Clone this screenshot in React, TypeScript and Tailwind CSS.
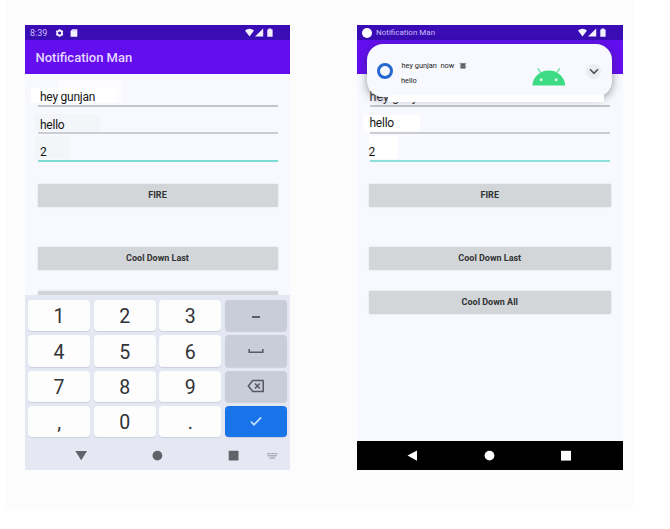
import type { ReactNode } from "react";

function StatusIcons() {
  return (
    <svg width="30" height="10" viewBox="0 0 30 10" fill="#f4f1ff" className="shrink-0">
      <path d="M0 2.6Q4.5 -1.1 9 2.6L4.5 8.6Z" />
      <path d="M18.2 0.5V8.6H10Z" />
      <path d="M22.3 1.5H23.5V0.5H26.3V1.5H27.6V8.8H22.3Z" />
    </svg>
  );
}

function Button({ label, className = "" }: { label: string; className?: string }) {
  return (
    <div
      className={`flex h-[23px] shrink-0 items-center justify-center rounded-[1px] bg-[#d3d6d9] pt-px text-[9px] font-bold text-[#303234] shadow-[0_0_2px_#d3d6d9] ${className}`}
    >
      {label}
    </div>
  );
}

function Key({ children, tone = "bg-[#fdfdfe]" }: { children: ReactNode; tone?: string }) {
  return (
    <div
      className={`flex items-center justify-center rounded-[4px] text-[19.5px] leading-none text-[#303236] shadow-[0_1px_1px_#cdd0dc] ${tone}`}
    >
      {children}
    </div>
  );
}

function Digit({ children }: { children: ReactNode }) {
  return (
    <Key>
      <span className="pt-[3px]">{children}</span>
    </Key>
  );
}

function LeftPhone() {
  return (
    <div className="flex h-[445px] w-[265px] shrink-0 flex-col overflow-hidden bg-[#f8f9ff]">
      <div className="flex h-[15px] shrink-0 items-center bg-[#3a0cb5] pl-[5px] pr-[15px] pt-px text-[9px] text-[#cdbcf5]">
        <span className="w-[25px] pt-px">8:39</span>
        <svg width="24" height="10" viewBox="0 0 24 10" fill="#f4f1ff">
          <circle cx="4.6" cy="5" r="2.4" fill="none" stroke="#f4f1ff" strokeWidth="1.7" />
          <path
            d="M4.6 1.2V2.4M4.6 7.6V8.8M1.3 3.1L2.4 3.7M6.8 6.3L7.9 6.9M1.3 6.9L2.4 6.3M6.8 3.7L7.9 3.1"
            stroke="#f4f1ff"
            strokeWidth="1.8"
          />
          <path d="M17.3 1.2H22.3V8.7H15.6V3Z" />
          <path d="M17.8 2V3.4M19.3 2V3.4M20.8 2V3.4" stroke="#a995e4" strokeWidth="0.5" />
        </svg>
        <span className="flex-1" />
        <StatusIcons />
      </div>
      <div className="flex h-[34px] shrink-0 items-center bg-[#620eef] pl-[10.5px] pt-[2px] text-[13px] font-medium text-[#e6d6ff]">
        Notification Man
      </div>
      <div className="flex h-[221px] shrink-0 flex-col overflow-hidden px-[12.5px]">
        <div className="-ml-[7px] mt-[6px] flex h-[25px] items-end pb-[2px]">
          <div className="relative z-10 flex h-[15px] w-[85px] items-center bg-white pl-[9.5px] pt-[2px] text-[12px] tracking-[-0.25px] text-[#151515]">
            hey gunjan
          </div>
          <div className="-ml-[58px] h-[23px] w-[64px] bg-white/50" />
        </div>
        <div className="h-[1.5px] shrink-0 bg-[#c3c5cb]" />
        <div className="-ml-[2.5px] mt-[7.5px] flex h-[17px] w-[65px] shrink-0 items-center bg-[#f4f5f9] pl-[5px] pt-[4px] text-[12px] tracking-[-0.25px] text-[#151515]">
          hello
        </div>
        <div className="mt-px h-[2px] shrink-0 bg-[#cbcdd2]" />
        <div className="-ml-[2.5px] mt-[1.5px] flex h-[23px] w-[35px] shrink-0 items-end bg-[#f4f5f9] pl-[5px] text-[12px] leading-[13px] text-[#151515]">
          2
        </div>
        <div className="mt-px h-[2px] shrink-0 bg-[#79dcd5]" />
        <Button label="FIRE" className="mt-[22px]" />
        <Button label="Cool Down Last" className="mt-[40px]" />
        <Button label="" className="mt-[21px]" />
      </div>
      <div className="flex h-[175px] shrink-0 flex-col bg-[#e5e8f2]">
        <div className="grid h-[142px] grid-cols-4 grid-rows-4 gap-x-[3.5px] gap-y-[4px] px-[3px] pt-[5px]">
          <Digit>1</Digit>
          <Digit>2</Digit>
          <Digit>3</Digit>
          <Key tone="bg-[#c9ccd9]">
            <span className="mt-[2px] h-[2px] w-[8px] bg-[#5b5d66]" />
          </Key>
          <Digit>4</Digit>
          <Digit>5</Digit>
          <Digit>6</Digit>
          <Key tone="bg-[#c9ccd9]">
            <svg width="16" height="6" viewBox="0 0 16 6" fill="none" stroke="#5b5d66" strokeWidth="1.6">
              <path d="M1.2 1V4.2H14.8V1" />
            </svg>
          </Key>
          <Digit>7</Digit>
          <Digit>8</Digit>
          <Digit>9</Digit>
          <Key tone="bg-[#c9ccd9]">
            <svg width="18" height="14" viewBox="0 0 18 14" fill="none" stroke="#555761" strokeWidth="1.5">
              <path d="M5.8 1.6H16.2V12.4H5.8L1.3 7Z" strokeLinejoin="round" />
              <path d="M7.9 4.5L12.8 9.5M12.8 4.5L7.9 9.5" />
            </svg>
          </Key>
          <Digit>,</Digit>
          <Digit>0</Digit>
          <Digit>.</Digit>
          <Key tone="bg-[#1974ea]">
            <svg width="14" height="12" viewBox="0 0 14 12" fill="none" stroke="#c5e0ff" strokeWidth="1.7">
              <path d="M1.8 6.5L5 9.7L12.2 2.4" />
            </svg>
          </Key>
        </div>
        <svg width="265" height="33" viewBox="0 0 265 33" fill="#616368">
          <path d="M50.3 14H62L56.2 23.2Z" />
          <circle cx="132.4" cy="18.6" r="4.9" />
          <rect x="203.7" y="13.8" width="9.8" height="9.8" rx="0.5" />
          <g fill="none" stroke="#a5a8b1" strokeWidth="1.4">
            <path d="M242 16.6H252.5M242.5 18.8H252" strokeDasharray="1.9 0.3" />
            <path d="M244.5 21H250" />
          </g>
        </svg>
      </div>
    </div>
  );
}

function NotificationCard() {
  return (
    <div className="absolute left-[10px] top-[19px] flex h-[53px] w-[245px] rounded-[16px] bg-[#f7f9fe] shadow-[0_2px_8px_rgba(50,50,70,0.5)]">
      <div className="ml-[10px] mt-[19px] size-[16px] shrink-0 rounded-full border-[3px] border-[#2768ce]" />
      <div className="ml-[8.5px] mt-[15px] flex w-[130.5px] shrink-0 flex-col text-[7.4px] leading-[14.5px] text-[#222]">
        <div className="flex items-center">
          <span className="w-[39px] whitespace-nowrap">hey gunjan</span>
          <span>now</span>
          <svg width="8" height="8" viewBox="0 0 8 8" className="ml-[4.5px]">
            <path d="M1.8 1.2H6.2L6.6 6.5H1.4Z" fill="#55575b" />
            <path d="M0.4 1.9L1.8 0.9M7.6 1.9L6.2 0.9M0.8 4.2H7.2" stroke="#888a90" />
          </svg>
        </div>
        <span className="-ml-[0.5px]">hello</span>
      </div>
      <svg width="34" height="20" viewBox="0 0 34 20" className="mt-[22px] shrink-0">
        <path d="M0.5 19.5A16.3 15 0 0 1 33.1 19.5Z" fill="#3ddb83" />
        <path d="M8.5 6.5L5.8 2.3M25 6.5L27.7 2.3" stroke="#5fdf9b" strokeWidth="1.3" />
        <circle cx="9.2" cy="13.7" r="1.5" fill="#d7fae6" />
        <circle cx="24.2" cy="13.7" r="1.5" fill="#d7fae6" />
      </svg>
      <div className="ml-[20px] mt-[20px] flex size-[15px] shrink-0 items-center justify-center rounded-full bg-[#eaedf3]">
        <svg width="10" height="7" viewBox="0 0 10 7" fill="none" stroke="#505257" strokeWidth="1.6">
          <path d="M1 1.3L5 5.3L9 1.3" />
        </svg>
      </div>
    </div>
  );
}

function RightPhone() {
  return (
    <div className="relative flex h-[445px] w-[265.5px] shrink-0 flex-col overflow-hidden bg-[#f7f9fe]">
      <div className="flex h-[15px] shrink-0 items-center bg-[#3a0cb5] pl-[5px] pr-[14.5px] text-[8px] text-[#cdbcf5]">
        <span className="mr-[4px] size-[10px] rounded-full bg-white" />
        <span className="flex-1 pt-px">Notification Man</span>
        <StatusIcons />
      </div>
      <div className="h-[34px] shrink-0 bg-[#620eef]" />
      <div className="flex flex-1 flex-col px-[12.5px]">
        <div className="flex h-[31px] shrink-0 items-end text-[12.5px] leading-[16px] text-[#333]">
          hey gunjan
        </div>
        <div className="h-[1.5px] shrink-0 bg-[#c3c5cb]" />
        <div className="-ml-[6.5px] mt-[8px] flex h-[16px] w-[57px] shrink-0 items-center bg-white pl-[6.5px] text-[12px] tracking-[-0.25px] text-[#151515]">
          hello
        </div>
        <div className="mt-[1.5px] h-[2px] shrink-0 bg-[#cbcdd2]" />
        <div className="-ml-[1px] mt-[2px] flex h-[23px] w-[29px] shrink-0 items-end bg-white text-[12px] leading-[13px] text-[#151515]">
          2
        </div>
        <div className="mt-[0.5px] h-[2px] shrink-0 bg-[#8de0db]" />
        <Button label="FIRE" className="-mx-[0.5px] mt-[22px]" />
        <Button label="Cool Down Last" className="-mx-[0.5px] mt-[40.5px]" />
        <Button label="Cool Down All" className="-mx-[0.5px] mt-[21px]" />
      </div>
      <div className="h-[29px] shrink-0 bg-black">
        <svg width="265" height="29" viewBox="0 0 265 29" fill="#fff">
          <path d="M60 9.5V19.7L50.5 14.6Z" />
          <circle cx="132.5" cy="14.6" r="4.9" />
          <rect x="204" y="9.8" width="10" height="9.8" />
        </svg>
      </div>
      <NotificationCard />
      <div className="absolute left-[31px] top-[70px] h-[7px] w-[216px] bg-white" />
    </div>
  );
}

export default function App() {
  return (
    <div className="h-[529px] w-[670px] overflow-hidden bg-white pl-[5px] font-[Roboto,'Liberation_Sans',sans-serif]">
      <div className="flex h-[509px] w-[628px] justify-between bg-[#fcfcfc] pl-[20px] pr-[10.5px] pt-[25px]">
        <LeftPhone />
        <RightPhone />
      </div>
    </div>
  );
}
